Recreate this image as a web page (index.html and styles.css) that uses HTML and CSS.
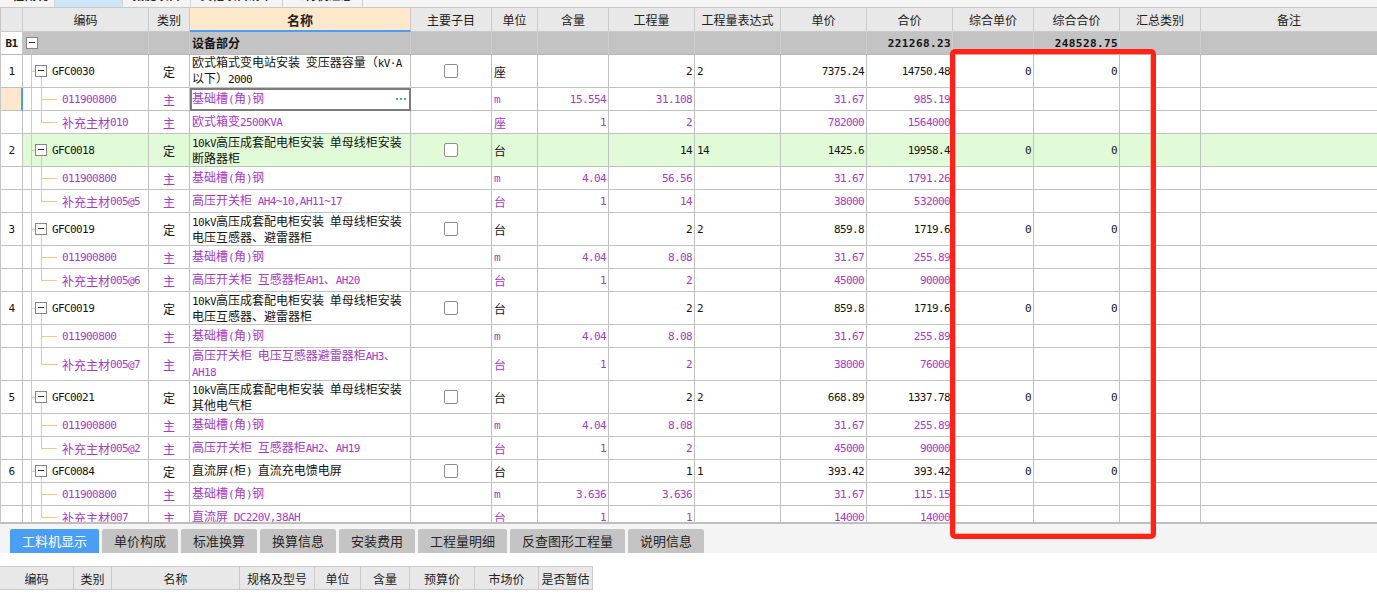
FILE: index.html
```
<!DOCTYPE html>
<html lang="zh">
<head>
<meta charset="utf-8">
<title>工料机</title>
<link rel="stylesheet" href="styles.css">
</head>
<body>
<div class="top">
  <div class="tt w0"><span>工程概况</span></div>
  <div class="tt w1 act"><span>分部分项</span></div>
  <div class="tt w2"><span>措施项目</span></div>
  <div class="tt w3"><span>其他项目清单</span></div>
  <div class="tt w4"><span>人材机汇总</span></div>
</div>

<div class="grid">
  <div class="row hd">
    <div class="c c0"></div><div class="c">编码</div><div class="c">类别</div><div class="c nmh">名称</div><div class="c">主要子目</div><div class="c">单位</div><div class="c">含量</div><div class="c">工程量</div><div class="c">工程量表达式</div><div class="c">单价</div><div class="c">合价</div><div class="c">综合单价</div><div class="c">综合合价</div><div class="c">汇总类别</div><div class="c x">备注</div>
  </div>

  <div class="row b1">
    <div class="c c0 m">B1</div><div class="c cd tb"><span class="bx"></span></div><div class="c"></div><div class="c nm"><span>设备部分</span></div><div class="c"></div><div class="c"></div><div class="c"></div><div class="c"></div><div class="c"></div><div class="c"></div><div class="c r m">221268.23</div><div class="c"></div><div class="c r m">248528.75</div><div class="c"></div><div class="c x"></div>
  </div>

  <!-- 1 -->
  <div class="row h33">
    <div class="c c0 m">1</div><div class="c cd tm"><span class="bx"></span><span class="m">GFC0030</span></div><div class="c lb">定</div><div class="c nm"><span>欧式箱式变电站安装 变压器容量（<span class="m">kV·A</span><br>以下）<span class="m">2000</span></span></div><div class="c ck"><span class="cb"></span></div><div class="c un">座</div><div class="c"></div><div class="c r m">2</div><div class="c l m">2</div><div class="c r m">7375.24</div><div class="c r m">14750.48</div><div class="c r m">0</div><div class="c r m">0</div><div class="c"></div><div class="c x"></div>
  </div>
  <div class="row sub sel">
    <div class="c c0"></div><div class="c cd tc"><span class="m">011900800</span></div><div class="c lb">主</div><div class="c nm ed"><span>基础槽<span class="m">(</span>角<span class="m">)</span>钢</span><span class="dots"><i></i><i></i><i></i></span></div><div class="c"></div><div class="c un m">m</div><div class="c r m">15.554</div><div class="c r m">31.108</div><div class="c"></div><div class="c r m">31.67</div><div class="c r m">985.19</div><div class="c"></div><div class="c"></div><div class="c"></div><div class="c x"></div>
  </div>
  <div class="row sub">
    <div class="c c0"></div><div class="c cd tc lc">补充主材<span class="m">010</span></div><div class="c lb">主</div><div class="c nm"><span>欧式箱变<span class="m">2500KVA</span></span></div><div class="c"></div><div class="c un">座</div><div class="c r m">1</div><div class="c r m">2</div><div class="c"></div><div class="c r m">782000</div><div class="c r m">1564000</div><div class="c"></div><div class="c"></div><div class="c"></div><div class="c x"></div>
  </div>

  <!-- 2 -->
  <div class="row h33 green">
    <div class="c c0 m">2</div><div class="c cd tm"><span class="bx"></span><span class="m">GFC0018</span></div><div class="c lb">定</div><div class="c nm"><span><span class="m">10kV</span>高压成套配电柜安装 单母线柜安装<br>断路器柜</span></div><div class="c ck"><span class="cb"></span></div><div class="c un">台</div><div class="c"></div><div class="c r m">14</div><div class="c l m">14</div><div class="c r m">1425.6</div><div class="c r m">19958.4</div><div class="c r m">0</div><div class="c r m">0</div><div class="c"></div><div class="c x"></div>
  </div>
  <div class="row sub">
    <div class="c c0"></div><div class="c cd tc"><span class="m">011900800</span></div><div class="c lb">主</div><div class="c nm"><span>基础槽<span class="m">(</span>角<span class="m">)</span>钢</span></div><div class="c"></div><div class="c un m">m</div><div class="c r m">4.04</div><div class="c r m">56.56</div><div class="c"></div><div class="c r m">31.67</div><div class="c r m">1791.26</div><div class="c"></div><div class="c"></div><div class="c"></div><div class="c x"></div>
  </div>
  <div class="row sub">
    <div class="c c0"></div><div class="c cd tc lc">补充主材<span class="m">005@5</span></div><div class="c lb">主</div><div class="c nm"><span>高压开关柜 <span class="m">AH4~10,AH11~17</span></span></div><div class="c"></div><div class="c un">台</div><div class="c r m">1</div><div class="c r m">14</div><div class="c"></div><div class="c r m">38000</div><div class="c r m">532000</div><div class="c"></div><div class="c"></div><div class="c"></div><div class="c x"></div>
  </div>

  <!-- 3 -->
  <div class="row h33">
    <div class="c c0 m">3</div><div class="c cd tm"><span class="bx"></span><span class="m">GFC0019</span></div><div class="c lb">定</div><div class="c nm"><span><span class="m">10kV</span>高压成套配电柜安装 单母线柜安装<br>电压互感器、避雷器柜</span></div><div class="c ck"><span class="cb"></span></div><div class="c un">台</div><div class="c"></div><div class="c r m">2</div><div class="c l m">2</div><div class="c r m">859.8</div><div class="c r m">1719.6</div><div class="c r m">0</div><div class="c r m">0</div><div class="c"></div><div class="c x"></div>
  </div>
  <div class="row sub">
    <div class="c c0"></div><div class="c cd tc"><span class="m">011900800</span></div><div class="c lb">主</div><div class="c nm"><span>基础槽<span class="m">(</span>角<span class="m">)</span>钢</span></div><div class="c"></div><div class="c un m">m</div><div class="c r m">4.04</div><div class="c r m">8.08</div><div class="c"></div><div class="c r m">31.67</div><div class="c r m">255.89</div><div class="c"></div><div class="c"></div><div class="c"></div><div class="c x"></div>
  </div>
  <div class="row sub">
    <div class="c c0"></div><div class="c cd tc lc">补充主材<span class="m">005@6</span></div><div class="c lb">主</div><div class="c nm"><span>高压开关柜 互感器柜<span class="m">AH1</span>、<span class="m">AH20</span></span></div><div class="c"></div><div class="c un">台</div><div class="c r m">1</div><div class="c r m">2</div><div class="c"></div><div class="c r m">45000</div><div class="c r m">90000</div><div class="c"></div><div class="c"></div><div class="c"></div><div class="c x"></div>
  </div>

  <!-- 4 -->
  <div class="row h33">
    <div class="c c0 m">4</div><div class="c cd tm"><span class="bx"></span><span class="m">GFC0019</span></div><div class="c lb">定</div><div class="c nm"><span><span class="m">10kV</span>高压成套配电柜安装 单母线柜安装<br>电压互感器、避雷器柜</span></div><div class="c ck"><span class="cb"></span></div><div class="c un">台</div><div class="c"></div><div class="c r m">2</div><div class="c l m">2</div><div class="c r m">859.8</div><div class="c r m">1719.6</div><div class="c r m">0</div><div class="c r m">0</div><div class="c"></div><div class="c x"></div>
  </div>
  <div class="row sub">
    <div class="c c0"></div><div class="c cd tc"><span class="m">011900800</span></div><div class="c lb">主</div><div class="c nm"><span>基础槽<span class="m">(</span>角<span class="m">)</span>钢</span></div><div class="c"></div><div class="c un m">m</div><div class="c r m">4.04</div><div class="c r m">8.08</div><div class="c"></div><div class="c r m">31.67</div><div class="c r m">255.89</div><div class="c"></div><div class="c"></div><div class="c"></div><div class="c x"></div>
  </div>
  <div class="row sub h33">
    <div class="c c0"></div><div class="c cd tc lc">补充主材<span class="m">005@7</span></div><div class="c lb">主</div><div class="c nm"><span>高压开关柜 电压互感器避雷器柜<span class="m">AH3</span>、<br><span class="m">AH18</span></span></div><div class="c"></div><div class="c un">台</div><div class="c r m">1</div><div class="c r m">2</div><div class="c"></div><div class="c r m">38000</div><div class="c r m">76000</div><div class="c"></div><div class="c"></div><div class="c"></div><div class="c x"></div>
  </div>

  <!-- 5 -->
  <div class="row h33">
    <div class="c c0 m">5</div><div class="c cd tm"><span class="bx"></span><span class="m">GFC0021</span></div><div class="c lb">定</div><div class="c nm"><span><span class="m">10kV</span>高压成套配电柜安装 单母线柜安装<br>其他电气柜</span></div><div class="c ck"><span class="cb"></span></div><div class="c un">台</div><div class="c"></div><div class="c r m">2</div><div class="c l m">2</div><div class="c r m">668.89</div><div class="c r m">1337.78</div><div class="c r m">0</div><div class="c r m">0</div><div class="c"></div><div class="c x"></div>
  </div>
  <div class="row sub">
    <div class="c c0"></div><div class="c cd tc"><span class="m">011900800</span></div><div class="c lb">主</div><div class="c nm"><span>基础槽<span class="m">(</span>角<span class="m">)</span>钢</span></div><div class="c"></div><div class="c un m">m</div><div class="c r m">4.04</div><div class="c r m">8.08</div><div class="c"></div><div class="c r m">31.67</div><div class="c r m">255.89</div><div class="c"></div><div class="c"></div><div class="c"></div><div class="c x"></div>
  </div>
  <div class="row sub">
    <div class="c c0"></div><div class="c cd tc lc">补充主材<span class="m">005@2</span></div><div class="c lb">主</div><div class="c nm"><span>高压开关柜 互感器柜<span class="m">AH2</span>、<span class="m">AH19</span></span></div><div class="c"></div><div class="c un">台</div><div class="c r m">1</div><div class="c r m">2</div><div class="c"></div><div class="c r m">45000</div><div class="c r m">90000</div><div class="c"></div><div class="c"></div><div class="c"></div><div class="c x"></div>
  </div>

  <!-- 6 -->
  <div class="row">
    <div class="c c0 m">6</div><div class="c cd tm"><span class="bx"></span><span class="m">GFC0084</span></div><div class="c lb">定</div><div class="c nm"><span>直流屏<span class="m">(</span>柜<span class="m">)</span> 直流充电馈电屏</span></div><div class="c ck"><span class="cb"></span></div><div class="c un">台</div><div class="c"></div><div class="c r m">1</div><div class="c l m">1</div><div class="c r m">393.42</div><div class="c r m">393.42</div><div class="c r m">0</div><div class="c r m">0</div><div class="c"></div><div class="c x"></div>
  </div>
  <div class="row sub">
    <div class="c c0"></div><div class="c cd tc"><span class="m">011900800</span></div><div class="c lb">主</div><div class="c nm"><span>基础槽<span class="m">(</span>角<span class="m">)</span>钢</span></div><div class="c"></div><div class="c un m">m</div><div class="c r m">3.636</div><div class="c r m">3.636</div><div class="c"></div><div class="c r m">31.67</div><div class="c r m">115.15</div><div class="c"></div><div class="c"></div><div class="c"></div><div class="c x"></div>
  </div>
  <div class="row sub">
    <div class="c c0"></div><div class="c cd tc lc">补充主材<span class="m">007</span></div><div class="c lb">主</div><div class="c nm"><span>直流屏 <span class="m">DC220V,38AH</span></span></div><div class="c"></div><div class="c un">台</div><div class="c r m">1</div><div class="c r m">1</div><div class="c"></div><div class="c r m">14000</div><div class="c r m">14000</div><div class="c"></div><div class="c"></div><div class="c"></div><div class="c x"></div>
  </div>
</div>

<div class="tabs">
  <div class="tab on">工料机显示</div>
  <div class="tab">单价构成</div>
  <div class="tab">标准换算</div>
  <div class="tab">换算信息</div>
  <div class="tab">安装费用</div>
  <div class="tab">工程量明细</div>
  <div class="tab">反查图形工程量</div>
  <div class="tab">说明信息</div>
</div>
<div class="panel">
  <div class="bh">
    <div class="bc">编码</div><div class="bc">类别</div><div class="bc">名称</div><div class="bc">规格及型号</div><div class="bc">单位</div><div class="bc">含量</div><div class="bc">预算价</div><div class="bc">市场价</div><div class="bc">是否暂估</div>
  </div>
</div>

<div class="hl"></div>
</body>
</html>
```

FILE: styles.css
```
* { box-sizing: border-box; }
:root { --tl: #f8c47e; }
body {
  margin: 0;
  width: 1377px;
  height: 594px;
  overflow: hidden;
  position: relative;
  background: #fff;
  font-family: "Noto Sans CJK SC", "Noto Sans", sans-serif;
  font-size: 12px;
  color: #141414;
}

/* top strip of cut-off tabs */
.top {
  display: flex;
  height: 8px;
  background: #f4f4f4;
  border-bottom: 1px solid #c9c9c9;
  overflow: hidden;
}
.tt {
  height: 7px;
  border-right: 1px solid #d3d3d3;
  overflow: hidden;
  font-size: 12px;
  line-height: 14px;
  color: #2a2a2a;
  text-align: center;
  flex: none;
}
.tt span { display: block; margin-top: -12px; font-weight: bold; }
.w0 { width: 55px; text-align: left; }
.w1 { width: 68px; }
.w2 { width: 68px; }
.w3 { width: 92px; }
.w4 { width: 80px; }
.act { background: #cde6fa; }
.act span { visibility: hidden; }

/* grid */
.grid {
  height: 516px;
  border-bottom: 2px solid #bfbfbf;
  overflow: hidden;
}
.row {
  display: grid;
  grid-template-columns: 23px 126px 41px 221px 81px 46px 71px 86px 86px 86px 86px 81px 86px 81px 176px;
  height: 23px;
}
.h33 { height: 33px; }
.c {
  border-right: 1px solid #c0c0c0;
  border-bottom: 1px solid #c0c0c0;
  display: flex;
  align-items: center;
  white-space: nowrap;
  overflow: hidden;
  min-width: 0;
}
.c.x { border-right: none; }
.c0 { justify-content: center; background-color: #fff; border-left: 1px solid #c6c6c6; }

.m {
  font-family: "DejaVu Sans Mono", monospace;
  font-size: 11px;
  letter-spacing: -0.6px;
}
.r { justify-content: flex-end; padding-right: 2px; }
.l { padding-left: 2px; }
.lb { justify-content: center; }
.un { padding-left: 2px; }
.nm { padding-left: 2px; word-spacing: 3px; }
.nm > span:first-child { line-height: 14px; }
.ck { justify-content: center; }
.cb {
  width: 14px;
  height: 14px;
  border: 1px solid #8e8e8e;
  border-radius: 2px;
  background: #fff;
}

/* header */
.hd { height: 24px; }
.hd .c {
  background: #e8e8e8;
  justify-content: center;
  color: #222;
  border-right-color: #c9c9c9;
  border-bottom-color: #c9c9c9;
}
.hd .c0 { background: #e8e8e8; }
.hd .nmh {
  background: #fde8cb;
  font-weight: bold;
  font-size: 13px;
  border-bottom: 2px solid #4a9ff5;
}

/* B1 row */
.b1 .c {
  background-color: #c3c3c3;
  border-right-color: #cdcdcd;
  border-bottom-color: #b9b9b9;
  font-weight: bold;
}
.b1 .c0 { background-color: #fff; border-right-color: #c0c0c0; }
.b1 .r.m { letter-spacing: 0.4px; padding-right: 1px; }

/* sub rows */
.sub .c { color: #a53ac6; }

/* green */
.green .c { background-color: #e1fbd8; }
.green .c0 { background-color: #fff; }

/* selected / editing */
.sel .c0 { background-color: #fde8cb; border-right: 2px solid #4a9ff5; }
.ed { outline: 2px solid #7c7c7c; outline-offset: -2px; }
.dots { margin-left: auto; margin-right: 4px; display: flex; gap: 2px; }
.dots i { width: 2px; height: 2px; background: #5b9bd5; display: block; }

/* tree */
.bx {
  flex: none;
  width: 12px;
  height: 12px;
  border: 1px solid #868686;
  background: #fff;
  position: relative;
  margin-right: 5px;
}
.bx::after {
  content: "";
  position: absolute;
  left: 2px;
  right: 2px;
  top: 4px;
  height: 1px;
  background: #333;
}
.tb {
  padding-left: 3px;
  background-image: linear-gradient(var(--tl), var(--tl));
  background-position: 8px 100%;
  background-size: 1px calc(50% - 6px);
  background-repeat: no-repeat;
}
.tm {
  padding-left: 12px;
  background-image: linear-gradient(var(--tl), var(--tl)), linear-gradient(var(--tl), var(--tl)), linear-gradient(var(--tl), var(--tl));
  background-position: 8px 0, 8px 50%, 18px 100%;
  background-size: 1px 100%, 4px 1px, 1px calc(50% - 6px);
  background-repeat: no-repeat;
}
.tc {
  padding-left: 39px;
  background-image: linear-gradient(var(--tl), var(--tl)), linear-gradient(var(--tl), var(--tl)), linear-gradient(var(--tl), var(--tl));
  background-position: 8px 0, 18px 0, 18px 50%;
  background-size: 1px 100%, 1px 100%, 16px 1px;
  background-repeat: no-repeat;
}
.tc.lc { background-size: 1px 100%, 1px 50%, 16px 1px; }

/* bottom tabs */
.tabs {
  display: flex;
  gap: 3px;
  background: #f4f4f4;
  padding: 5px 0 0 10px;
  height: 29px;
}
.tab {
  height: 24px;
  padding: 0 12px;
  background: #c4c4c4;
  border-radius: 2px 2px 0 0;
  font-size: 13px;
  line-height: 24px;
  color: #262626;
}
.tab.on { background: #4a9ff5; color: #fff; }

.panel { padding-top: 13px; background: #fff; }
.bh {
  display: grid;
  grid-template-columns: 74px 38px 128px 75px 46px 49px 65px 64px 54px;
  width: 593px;
  height: 24px;
  border-top: 1px solid #cacaca;
  border-bottom: 1px solid #cacaca;
}
.bc {
  background: #e8e8e8;
  border-right: 1px solid #cacaca;
  display: flex;
  align-items: center;
  justify-content: center;
  color: #222;
  font-size: 12px;
}

/* red highlight annotation */
.hl {
  position: absolute;
  left: 950px;
  top: 49px;
  width: 206px;
  height: 490px;
  border: 5px solid #ff2217;
  border-radius: 5px;
  box-shadow: inset 0 0 0 1px rgba(255, 140, 130, 0.6);
}
```
